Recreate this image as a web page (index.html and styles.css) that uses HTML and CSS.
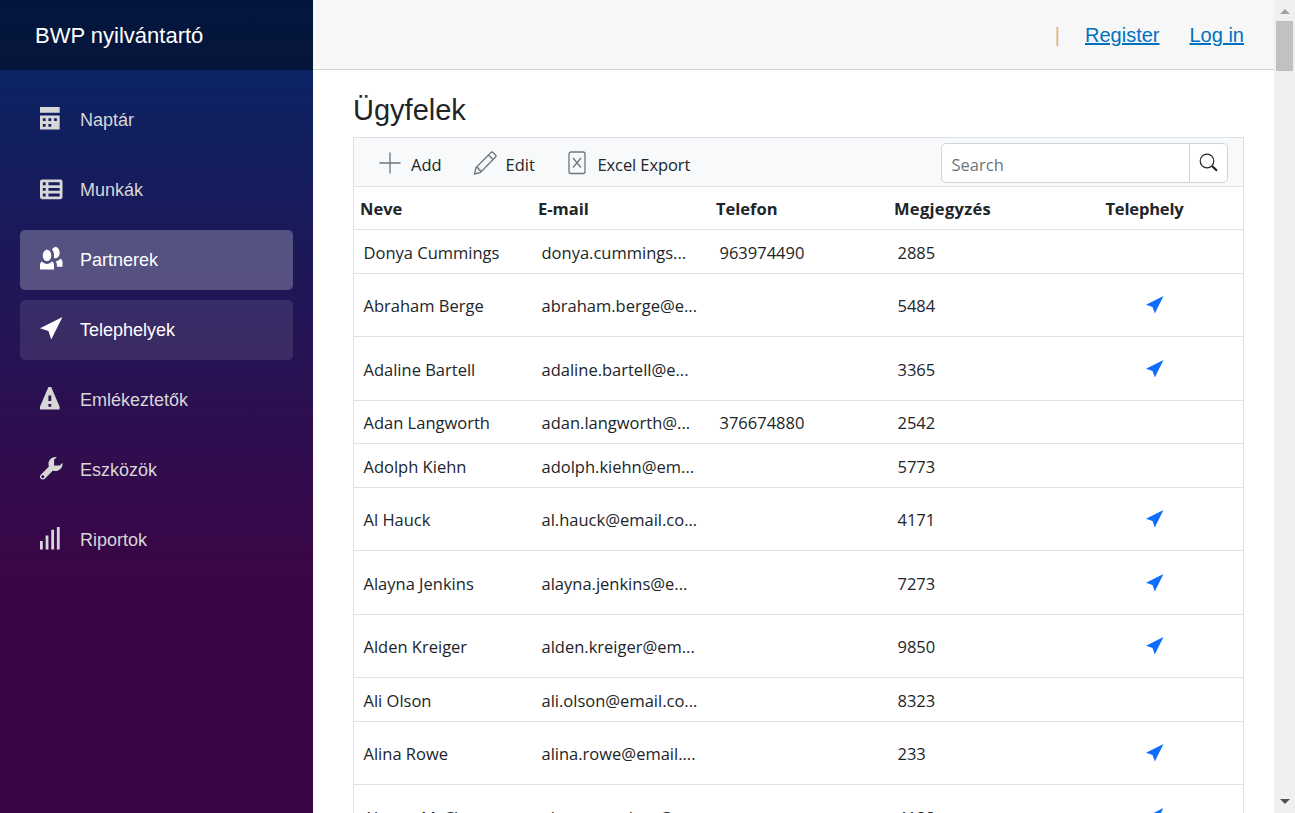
FILE: index.html
```
<!DOCTYPE html>
<html lang="hu">
<head>
<meta charset="utf-8">
<title>BWP nyilvántartó</title>
<link rel="stylesheet" href="styles.css">
</head>
<body>
<svg class="defs" width="0" height="0">
  <symbol id="location" viewBox="0 0 8 8"><path d="M8 0l-8 4 3 1 1 3 4-8z"/></symbol>
</svg>
<div class="page">
  <aside class="sidebar">
    <div class="brand">BWP nyilvántartó</div>
    <nav class="nav">
      <a class="nav-item"><svg class="oi" viewBox="0 0 8 8"><path d="M0 0v2h7v-2h-7zm0 3v4.91c0 .06.03.09.09.09h6.81c.06 0 .09-.03.09-.09v-4.91h-7zm1 1h1v1h-1v-1zm2 0h1v1h-1v-1zm2 0h1v1h-1v-1zm-4 2h1v1h-1v-1zm2 0h1v1h-1v-1z"/></svg>Naptár</a>
      <a class="nav-item"><svg class="oi" viewBox="0 -.9 8 8"><path d="M.75 0c-.41 0-.75.34-.75.75v5.5c0 .41.34.75.75.75h6.5c.41 0 .75-.34.75-.75v-5.5c0-.41-.34-.75-.75-.75h-6.5zm.25 1h1v1h-1v-1zm2 0h4v1h-4v-1zm-2 2h1v1h-1v-1zm2 0h4v1h-4v-1zm-2 2h1v1h-1v-1zm2 0h4v1h-4v-1z"/></svg>Munkák</a>
      <a class="nav-item active"><svg class="oi" viewBox="0 0 8 8"><path d="M5.5 0c-.51 0-.95.35-1.22.88.45.54.72 1.28.72 2.13 0 .29-.03.55-.09.81.19.11.38.19.59.19.83 0 1.5-.9 1.5-2s-.67-2-1.5-2zm-3 1c-.83 0-1.5.9-1.5 2s.67 2 1.5 2 1.5-.9 1.5-2-.67-2-1.5-2zm4.75 3.16c-.43.51-1.02.82-1.69.84.27.38.44.84.44 1.34v.66h2v-1.66c0-.52-.31-.97-.75-1.19zm-6.5 1c-.44.22-.75.67-.75 1.19v1.66h5v-1.66c0-.52-.31-.97-.75-1.19-.45.53-1.06.84-1.75.84s-1.3-.32-1.75-.84z"/></svg>Partnerek</a>
      <a class="nav-item hovered"><svg class="oi"><use href="#location"/></svg>Telephelyek</a>
      <a class="nav-item"><svg class="oi" viewBox="0 0 8 8"><path d="M3.09 0c-.06 0-.1.04-.13.09l-2.94 6.81c-.02.05-.03.13-.03.19v.81c0 .05.04.09.09.09h6.81c.05 0 .09-.04.09-.09v-.81c0-.05-.01-.14-.03-.19l-2.94-6.81c-.02-.05-.07-.09-.13-.09h-.81zm-.09 3h1v2h-1v-2zm0 3h1v1h-1v-1z"/></svg>Emlékeztetők</a>
      <a class="nav-item"><svg class="oi" viewBox="0 0 8 8"><path d="M5.5 0c-1.38 0-2.5 1.12-2.5 2.5 0 .32.08.62.19.91l-2.91 2.88c-.39.39-.39 1.05 0 1.44.2.2.46.28.72.28.26 0 .52-.09.72-.28l2.88-2.91c.28.11.58.19.91.19 1.38 0 2.5-1.12 2.5-2.5 0-.16 0-.32-.03-.47l-.97.97h-2v-2l.97-.97c-.15-.03-.31-.03-.47-.03zm-4.5 6.5c.28 0 .5.22.5.5s-.22.5-.5.5-.5-.22-.5-.5.22-.5.5-.5z"/></svg>Eszközök</a>
      <a class="nav-item"><svg class="oi" viewBox="0 0 8 8"><path d="M6 0v8h1v-8h-1zm-2 1v7h1v-7h-1zm-2 2v5h1v-5h-1zm-2 2v3h1v-3h-1z"/></svg>Riportok</a>
    </nav>
  </aside>
  <main class="main">
    <header class="top-row"><span class="divider">|</span><a class="link">Register</a><a class="link">Log in</a></header>
    <section class="content">
      <h3 class="title">Ügyfelek</h3>
      <div class="grid">
        <div class="toolbar">
          <span class="tool tool-add"><svg class="tool-icon" viewBox="0 0 24 24"><path d="M12 1.500v21M1.500 12h21"/></svg>Add</span>
          <span class="tool tool-edit"><svg class="tool-icon" viewBox="0 0 24 24"><path d="M1.500 23l1.500-6.500L18 1.500q1-1 2 0l2.500 2.500q1 1 0 2L7.500 21.500zM3 16.500q3 0 3 2.500q2 0 2 2M15.500 4l4.500 4.500"/></svg>Edit</span>
          <span class="tool tool-excel"><svg class="tool-icon" viewBox="0 0 24 24"><rect x="4" y="1" width="16" height="21.500" rx="2"/><path d="M8 7l8 9.500M16 7l-8 9.500"/></svg>Excel Export</span>
          <div class="search"><span class="search-input">Search</span><span class="search-button"><svg class="search-icon" viewBox="0 0 20 20"><circle cx="8" cy="8" r="6.800"/><path class="handle" d="M13 13l5 4.800"/></svg></span></div>
        </div>
        <div class="row head"><span>Neve</span><span>E-mail</span><span>Telefon</span><span class="wide">Megjegyzés</span><span class="center">Telephely</span></div>
        <div class="row"><span>Donya Cummings</span><span>donya.cummings...</span><span>963974490</span><span>2885</span><span></span></div>
        <div class="row tall"><span>Abraham Berge</span><span>abraham.berge@e...</span><span></span><span>5484</span><span class="center"><svg class="pin"><use href="#location"/></svg></span></div>
        <div class="row tall"><span>Adaline Bartell</span><span>adaline.bartell@e...</span><span></span><span>3365</span><span class="center"><svg class="pin"><use href="#location"/></svg></span></div>
        <div class="row"><span>Adan Langworth</span><span>adan.langworth@...</span><span>376674880</span><span>2542</span><span></span></div>
        <div class="row"><span>Adolph Kiehn</span><span>adolph.kiehn@em...</span><span></span><span>5773</span><span></span></div>
        <div class="row tall"><span>Al Hauck</span><span>al.hauck@email.co...</span><span></span><span>4171</span><span class="center"><svg class="pin"><use href="#location"/></svg></span></div>
        <div class="row tall"><span>Alayna Jenkins</span><span>alayna.jenkins@e...</span><span></span><span>7273</span><span class="center"><svg class="pin"><use href="#location"/></svg></span></div>
        <div class="row tall"><span>Alden Kreiger</span><span>alden.kreiger@em...</span><span></span><span>9850</span><span class="center"><svg class="pin"><use href="#location"/></svg></span></div>
        <div class="row"><span>Ali Olson</span><span>ali.olson@email.co...</span><span></span><span>8323</span><span></span></div>
        <div class="row tall"><span>Alina Rowe</span><span>alina.rowe@email....</span><span></span><span>233</span><span class="center"><svg class="pin"><use href="#location"/></svg></span></div>
        <div class="row tall"><span>Alanna McClure</span><span>alanna.mcclure@...</span><span></span><span>4188</span><span class="center"><svg class="pin"><use href="#location"/></svg></span></div>
      </div>
    </section>
  </main>
  <div class="scrollbar"><i class="arrow up"></i><div class="thumb"></div><i class="arrow down"></i></div>
</div>
</body>
</html>
```
FILE: styles.css
```
* { box-sizing: border-box; }
body { margin: 0; overflow: hidden; background: #fff; color: #212529; font-family: "Liberation Sans", Arial, sans-serif; }
.defs { display: block; }
.page { display: flex; height: 813px; overflow: hidden; }
.sidebar { width: 313px; flex: none; background: linear-gradient(180deg, rgb(5, 39, 103) 0%, #3a0647 70%); }
.brand { height: 70px; padding-left: 35px; line-height: 72px; font-size: 22px; color: #fff; background: rgba(0, 0, 0, .4); }
.nav { display: flex; flex-direction: column; gap: 10px; padding: 20px; }
.nav-item { display: flex; align-items: center; gap: 17.500px; height: 60px; padding-left: 20px; border-radius: 5px; font-size: 18px; color: #d7d7d7; }
.nav-item.active { background: rgba(255, 255, 255, .25); color: #fff; }
.nav-item.hovered { background: rgba(255, 255, 255, .1); color: #fff; }
.oi { width: 22.500px; height: 22.500px; margin-bottom: 3px; fill: currentColor; }
.main { flex: 1; min-width: 0; }
.top-row { display: flex; align-items: center; justify-content: flex-end; height: 70px; padding: 2px 30px 0 0; background: #f7f7f7; border-bottom: 1px solid #d6d5d5; font-size: 20px; }
.divider { color: #e0b090; margin-right: 25px; }
.link { color: #0071c1; text-decoration: underline; }
.link + .link { margin-left: 30px; }
.content { padding: 22px 30px 0 40px; }
.title { margin: 0 0 9px; font-size: 29px; font-weight: 400; line-height: 36px; }
.grid { width: 891px; border: 1px solid #dee2e6; font-family: "Open Sans", "Noto Sans", sans-serif; font-size: 16.500px; }
.toolbar { display: flex; align-items: center; height: 49px; padding: 1px 15px 0 24px; background: #f8f9fa; border-bottom: 1px solid #dee2e6; }
.tool { display: flex; align-items: center; gap: 9px; padding-top: 3px; white-space: nowrap; }
.tool-add { width: 94.500px; }
.tool-edit { width: 92px; }
.tool-excel { letter-spacing: -.1px; }
.tool-icon { width: 24px; height: 24px; margin-bottom: 3px; fill: none; stroke: #6c757d; stroke-width: 1.300; }
.search { display: flex; width: 287px; height: 40px; margin-left: auto; background: #fff; border: 1px solid #ced4da; border-radius: 5px; }
.search-input { flex: 1; padding: 2px 0 0 9.500px; line-height: 38px; color: #6c757d; }
.search-button { display: flex; align-items: center; justify-content: center; width: 38px; border-left: 1px solid #ced4da; }
.search-icon { width: 20px; height: 20px; fill: none; stroke: #212529; stroke-width: 1.200; }
.handle { stroke-width: 2.200; }
.row { display: grid; grid-template-columns: repeat(5, 178px); align-items: center; height: 43.500px; border-bottom: 1px solid #dee2e6; white-space: nowrap; }
.row > span { padding: 2px 0 0 9.500px; }
.row.tall { height: 63.500px; }
.row.head { height: 43px; font-weight: 700; }
.row.head > span { padding: 0 0 0 6px; }
.row.head > .wide { letter-spacing: .3px; }
.row > .center { padding: 0; text-align: center; }
.row.head > .center { padding: 0 21px 0 0; letter-spacing: -.15px; }
.pin { display: block; width: 17.500px; height: 17.500px; margin: 0 auto; fill: #0d6efd; }
.scrollbar { display: flex; flex-direction: column; align-items: center; width: 21px; background: #f0f0f0; }
.thumb { width: 17px; height: 50px; margin: 7px 0 auto; background: #c1c1c1; }
.arrow { width: 0; height: 0; border: 5px solid transparent; }
.up { margin-top: 4px; border-bottom-color: #a0a0a0; }
.down { margin-bottom: 4px; border-top-color: #505050; }
```
